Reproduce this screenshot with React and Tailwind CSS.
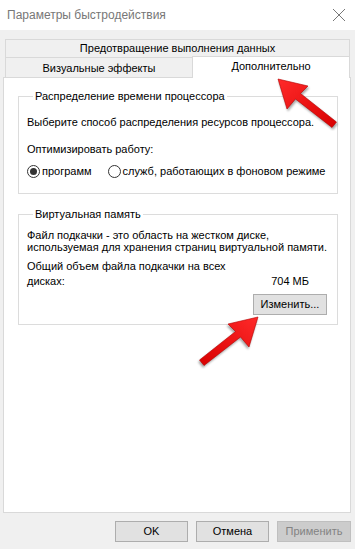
import React from "react";

const Radio = ({ checked, label }) => (
  <label className="flex items-center gap-[2px]">
    <span className="w-[13px] h-[13px] rounded-full border border-[#333] bg-white flex items-center justify-center">
      {checked && <span className="w-[7px] h-[7px] rounded-full bg-[#333]" />}
    </span>
    <span>{label}</span>
  </label>
);

const Arrow = ({ className, mirror, id }) => (
  <svg className={className} width="64" height="54" viewBox="0 0 64 54">
    <defs>
      <linearGradient id={id} x1="0" y1="0" x2="1" y2="1">
        <stop offset="0" stopColor="#ff2a2a" />
        <stop offset="1" stopColor="#d80000" />
      </linearGradient>
    </defs>
    <g transform={mirror ? "translate(64 0) scale(-1 1)" : undefined}>
      <path
        d="M2 2 L32 9 L24.5 16.5 L60.5 45 L56 50.5 L19.5 22 L11 32 Z"
        fill={`url(#${id})`}
        stroke="#b30000"
        strokeWidth="0.6"
        style={{ filter: "drop-shadow(1px 2px 1px rgba(0,0,0,0.35))" }}
      />
    </g>
  </svg>
);

export default function App() {
  return (
    <div className="relative w-[355px] h-[549px] overflow-hidden bg-[#f0f0f0] text-[11px] leading-[15px] text-black font-['Liberation_Sans',Arial,sans-serif]">
      {/* Title bar */}
      <div className="h-[30px] bg-white flex items-center justify-between pl-[7px] pr-[8px]">
        <span className="text-[12px] text-[#777]">Параметры быстродействия</span>
        <svg width="14" height="14" viewBox="0 0 14 14" className="mr-[1px]">
          <path d="M1 1 L13 13 M13 1 L1 13" stroke="#777" strokeWidth="1" />
        </svg>
      </div>

      <div className="pl-[3px] pr-[4px] pt-[9px]">
        {/* Tabs */}
        <div className="ml-[2px] mr-[1px] h-[18px] border border-b-0 border-[#d9d9d9] flex items-center justify-center">
          Предотвращение выполнения данных
        </div>
        <div className="ml-[2px] mr-[1px] h-[20px] flex items-start">
          <div className="w-[187px] h-[20px] border border-b-0 border-r-0 border-[#d9d9d9] flex items-center justify-center pt-[2px]">
            Визуальные эффекты
          </div>
          <div className="relative z-10 flex-1 -mt-px h-[22px] bg-white border border-b-0 border-[#d9d9d9] flex items-start justify-center pt-[2px]">
            Дополнительно
          </div>
        </div>

        {/* Panel */}
        <div className="h-[436px] bg-white border border-[#d9d9d9] pl-[14px] pr-[12px] pt-[11px]">
          <fieldset className="border border-[#dcdcdc] pl-[8px] pb-[14px]">
            <legend className="ml-[6px] px-[2px]">Распределение времени процессора</legend>
            <div className="mt-[11px]">Выберите способ распределения ресурсов процессора.</div>
            <div className="mt-[12px]">Оптимизировать работу:</div>
            <div className="mt-[7px] flex items-center gap-[16px]">
              <Radio checked label="программ" />
              <Radio label="служб, работающих в фоновом режиме" />
            </div>
          </fieldset>

          <fieldset className="mt-[13px] border border-[#dcdcdc] pl-[8px] pr-[10px] pb-[9px]">
            <legend className="ml-[6px] px-[2px]">Виртуальная память</legend>
            <div className="mt-[7px] leading-[12px]">
              Файл подкачки - это область на жестком диске,
              <br />
              используемая для хранения страниц виртуальной памяти.
            </div>
            <div className="mt-[6px] leading-[15px]">Общий объем файла подкачки на всех</div>
            <div className="leading-[15px] flex justify-between pr-[18px]">
              <span>дисках:</span>
              <span>704 МБ</span>
            </div>
            <div className="mt-[5px] flex justify-end">
              <button className="w-[74px] h-[21px] bg-[#e1e1e1] border border-[#adadad]">
                Изменить...
              </button>
            </div>
          </fieldset>
        </div>

        {/* Bottom buttons */}
        <div className="mt-[8px] flex justify-end gap-[8px]">
          <button className="w-[73px] h-[21px] bg-[#e1e1e1] border border-[#adadad]">OK</button>
          <button className="w-[73px] h-[21px] bg-[#e1e1e1] border border-[#adadad]">Отмена</button>
          <button className="w-[74px] h-[21px] bg-[#cccccc] border border-[#bfbfbf] text-[#838383]">
            Применить
          </button>
        </div>
      </div>

      {/* Annotation arrows */}
      <Arrow id="a1" className="absolute left-[276px] top-[77px] pointer-events-none" />
      <Arrow id="a2" mirror className="absolute left-[196px] top-[315px] pointer-events-none" />
    </div>
  );
}
